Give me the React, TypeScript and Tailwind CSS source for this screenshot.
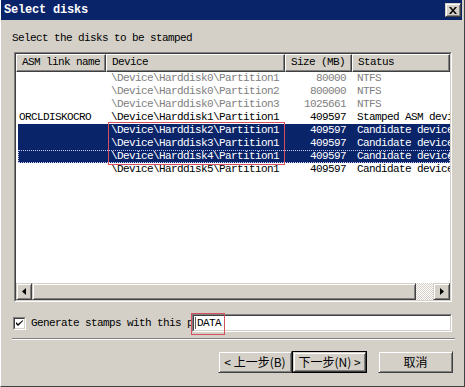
import React from "react";

type Row = {
  asm: string;
  dev: string;
  size: string;
  status: string;
  gray?: boolean;
  sel?: boolean;
  focus?: boolean;
};

const rows: Row[] = [
  { asm: "", dev: "\\Device\\Harddisk0\\Partition1", size: "80000", status: "NTFS", gray: true },
  { asm: "", dev: "\\Device\\Harddisk0\\Partition2", size: "800000", status: "NTFS", gray: true },
  { asm: "", dev: "\\Device\\Harddisk0\\Partition3", size: "1025661", status: "NTFS", gray: true },
  { asm: "ORCLDISKOCRO", dev: "\\Device\\Harddisk1\\Partition1", size: "409597", status: "Stamped ASM device" },
  { asm: "", dev: "\\Device\\Harddisk2\\Partition1", size: "409597", status: "Candidate device", sel: true },
  { asm: "", dev: "\\Device\\Harddisk3\\Partition1", size: "409597", status: "Candidate device", sel: true },
  { asm: "", dev: "\\Device\\Harddisk4\\Partition1", size: "409597", status: "Candidate device", sel: true, focus: true },
  { asm: "", dev: "\\Device\\Harddisk5\\Partition1", size: "409597", status: "Candidate device" },
];

const raised =
  "border border-t-[#d4d0c8] border-l-[#d4d0c8] border-r-[#404040] border-b-[#404040] shadow-[inset_1px_1px_0_#ffffff,inset_-1px_-1px_0_#808080] bg-[#d4d0c8]";

function HeaderCell({ w, label }: { w: string; label: string }) {
  return (
    <div
      className={`${w} h-[18px] shrink-0 border-t border-l border-white border-r border-b border-r-[#404040] border-b-[#404040] shadow-[inset_-1px_-1px_0_#808080] bg-[#d4d0c8] pl-[5px] leading-[15px] whitespace-nowrap overflow-hidden`}
    >
      {label}
    </div>
  );
}

export default function App() {
  return (
    <div className="relative w-[465px] h-[387px] overflow-hidden bg-[#d4d0c8] font-['Liberation_Mono',monospace] text-[11px] tracking-[-0.6px] text-black border-r-[1px] border-b-[1px] border-[#404040] border-l border-l-white">
      <div className="flex h-[20px] items-center justify-between bg-[#0a246a] pl-[3px] pr-[1px] mr-[2px]">
        <span className="text-[12px] font-bold text-white tracking-[-0.2px]">Select disks</span>
        <div className={`w-[16px] h-[14px] ${raised} flex items-center justify-center`}>
          <svg width="8" height="7" viewBox="0 0 8 7">
            <path d="M0 0h2l2 2.5L6 0h2L5 3.5 8 7H6L4 4.5 2 7H0l3-3.5z" fill="#000" />
          </svg>
        </div>
      </div>

      <div className="mt-[11px] ml-[11px] h-[14px] leading-[14px]">Select the disks to be stamped</div>

      <div className="mt-[7px] ml-[13px] w-[438px] h-[250px] flex border border-t-[#808080] border-l-[#808080] border-b-white border-r-white">
        <div className="relative flex-1 flex flex-col overflow-hidden bg-white border border-t-[#404040] border-l-[#404040] border-b-[#d4d0c8] border-r-[#d4d0c8]">
          <div className="flex">
            <HeaderCell w="w-[90px]" label="ASM link name" />
            <HeaderCell w="w-[179px]" label="Device" />
            <HeaderCell w="w-[67px]" label="Size (MB)" />
            <HeaderCell w="w-[98px]" label="Status" />
          </div>
          {rows.map((r, i) => (
            <div
              key={i}
              className={`relative flex h-[13px] leading-[13px] ml-[2px] w-[432px] ${
                r.sel ? "bg-[#0a246a] text-white" : "text-black"
              }`}
            >
              <div className="w-[88px] shrink-0 pl-[1px] whitespace-nowrap overflow-hidden">{r.asm}</div>
              <div className={`w-[179px] shrink-0 pl-[5px] whitespace-nowrap overflow-hidden ${r.gray ? "text-[#808080]" : ""}`}>{r.dev}</div>
              <div className={`w-[67px] shrink-0 pr-[6px] text-right whitespace-nowrap ${r.gray ? "text-[#808080]" : ""}`}>{r.size}</div>
              <div className={`w-[98px] shrink-0 pl-[5px] whitespace-nowrap overflow-hidden ${r.gray ? "text-[#808080]" : ""}`}>{r.status}</div>
              {r.focus && <div className="absolute inset-0 border border-dotted border-[#c8c8ff]" />}
            </div>
          ))}

          <div className="absolute left-[92px] top-[68px] w-[177px] h-[43px] border border-[#d8505e]" />

          <div className="mt-auto flex h-[17px]">
            <div className={`w-[16px] h-[17px] shrink-0 ${raised} flex items-center justify-center`}>
              <svg width="4" height="7" viewBox="0 0 4 7">
                <path d="M4 0v7L0 3.5z" fill="#000" />
              </svg>
            </div>
            <div className={`w-[384px] h-[17px] shrink-0 ${raised}`} />
            <div className="w-[17px] h-[17px] shrink-0 bg-[repeating-conic-gradient(#d4d0c8_0_25%,#ffffff_0_50%)] bg-[length:2px_2px]" />
            <div className={`w-[17px] h-[17px] shrink-0 ${raised} flex items-center justify-center`}>
              <svg width="4" height="7" viewBox="0 0 4 7">
                <path d="M0 0v7L4 3.5z" fill="#000" />
              </svg>
            </div>
          </div>
        </div>
      </div>

      <div className="mt-[12px] flex h-[18px] items-center">
        <div className="ml-[12px] w-[13px] h-[13px] shrink-0 flex border border-t-[#808080] border-l-[#808080] border-b-white border-r-white">
          <div className="flex-1 bg-white border border-t-[#404040] border-l-[#404040] border-b-[#d4d0c8] border-r-[#d4d0c8] flex items-center justify-center">
            <svg width="7" height="7" viewBox="0 0 7 7">
              <path d="M0 2v2l2 2 5-5V0L2 4z" fill="#000" />
            </svg>
          </div>
        </div>
        <div className="ml-[5px] w-[161px] shrink-0 overflow-hidden whitespace-nowrap leading-[18px]">
          Generate stamps with this prefix:
        </div>
        <div className="relative w-[260px] h-[18px] shrink-0 flex border border-t-[#808080] border-l-[#808080] border-b-white border-r-white">
          <div className="flex-1 flex items-center bg-white border border-t-[#404040] border-l-[#404040] border-b-[#d4d0c8] border-r-[#d4d0c8] pl-[1px]">
            <div className="w-[1px] h-[12px] bg-[#606060] mr-[1px]" />
            <span className="leading-[14px]">DATA</span>
          </div>
          <div className="absolute left-[-2px] top-[-2px] w-[34px] h-[22px] border border-[#d8505e]" />
        </div>
      </div>

      <div className="mt-[6px] ml-[11px] w-[443px] h-[2px] border-t border-t-[#808080] border-b border-b-white" />

      <div className="mt-[11px] flex font-['Noto_Sans_CJK_SC',sans-serif] text-[12px] tracking-normal">
        <div className={`ml-[217px] w-[74px] h-[22px] ${raised} flex items-center justify-center leading-none`}>
          &lt; 上一步(B)
        </div>
        <div className="w-[75px] h-[22px] border border-black flex">
          <div className={`flex-1 ${raised} flex items-center justify-center leading-none`}>下一步(N) &gt;</div>
        </div>
        <div className={`ml-[11px] w-[75px] h-[22px] ${raised} flex items-center justify-center leading-none`}>
          取消
        </div>
      </div>
    </div>
  );
}
